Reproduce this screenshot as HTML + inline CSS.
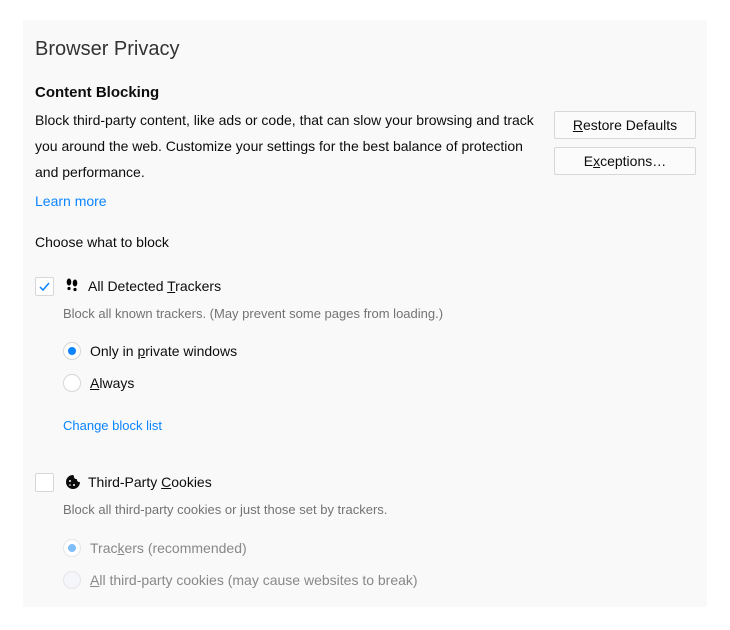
<!DOCTYPE html>
<html><head><style>
*{margin:0;padding:0;box-sizing:border-box}
body{width:730px;height:630px;background:#fff;font-family:"Liberation Sans",sans-serif;color:#0c0c0d;position:relative;overflow:hidden}
#p{position:absolute;left:23px;top:20px;width:684px;height:587px;background:#f9f9fa}
.a{position:absolute;white-space:nowrap}
.t{font-size:14px}
.g{font-size:13px;color:#737373}
.l{color:#0a84ff}
.btn{position:absolute;left:554px;width:142px;height:28px;border:1px solid #d7d7db;background:#fbfbfb;font-size:14px;text-align:center;line-height:26px;border-radius:2px}
.cb{position:absolute;left:35px;width:19px;height:19px;border:1px solid #d7d7db;background:#fff;border-radius:2px}
.r{position:absolute;left:63px;width:18px;height:18px;border:1px solid #d7d7db;border-radius:50%;background:#fff}
.r i{position:absolute;left:4px;top:4px;width:8px;height:8px;border-radius:50%;background:#0a84ff}
u{text-decoration:underline}
</style></head><body>
<div id="p"></div>
<div class="a" style="left:35px;top:38px;font-size:20px;color:#333">Browser Privacy</div>
<div class="a" style="left:35px;top:84px;font-size:15px;font-weight:bold">Content Blocking</div>
<div class="a t" style="left:35px;top:107px;line-height:26px">Block third-party content, like ads or code, that can slow your browsing and track<br>you around the web. Customize your settings for the best balance of protection<br>and performance.</div>
<div class="btn" style="top:111px"><u>R</u>estore Defaults</div>
<div class="btn" style="top:147px">E<u>x</u>ceptions…</div>
<div class="a t l" style="left:35px;top:193px">Learn more</div>
<div class="a t" style="left:35px;top:234px">Choose what to block</div>
<div class="cb" style="top:277px"><svg width="17" height="17" style="position:absolute;left:0;top:0"><path d="M4 9l3 3 6-7" stroke="#0a84ff" stroke-width="1.5" fill="none"/></svg></div>
<svg class="a" style="left:66px;top:278px" width="12" height="14"><ellipse cx="3" cy="4" rx="2.3" ry="3.5"/><ellipse cx="9" cy="5" rx="2.3" ry="3.5"/><circle cx="3" cy="10.5" r="1.6"/><circle cx="9" cy="11.5" r="1.6"/></svg>
<div class="a t" style="left:88px;top:278px">All Detected <u>T</u>rackers</div>
<div class="a g" style="left:63px;top:306px">Block all known trackers. (May prevent some pages from loading.)</div>
<div class="r" style="top:342px"><i></i></div>
<div class="a t" style="left:90px;top:343px">Only in <u>p</u>rivate windows</div>
<div class="r" style="top:374px"></div>
<div class="a t" style="left:90px;top:375px"><u>A</u>lways</div>
<div class="a l" style="left:63px;top:418px;font-size:13px">Change block list</div>
<div class="cb" style="top:473px"></div>
<svg class="a" style="left:65px;top:474px" width="16" height="16"><path d="M8 1a7 7 0 1 0 7 7 2.5 2.5 0 0 1-3-3 2.5 2.5 0 0 1-3-3z" fill="#0c0c0d"/><circle cx="5" cy="7" r="1" fill="#fff"/><circle cx="9" cy="11" r="1" fill="#fff"/><circle cx="5" cy="11" r=".8" fill="#fff"/></svg>
<div class="a t" style="left:88px;top:474px">Third-Party <u>C</u>ookies</div>
<div class="a g" style="left:63px;top:502px">Block all third-party cookies or just those set by trackers.</div>
<div class="r" style="top:539px;border-color:#e6e6ea"><i style="background:#80bdf9"></i></div>
<div class="a t" style="left:90px;top:540px;color:#888">Trac<u>k</u>ers (recommended)</div>
<div class="r" style="top:571px;border-color:#e6e6ea;background:#f5f6fb"></div>
<div class="a t" style="left:90px;top:572px;color:#888"><u>A</u>ll third-party cookies (may cause websites to break)</div>
</body></html>
